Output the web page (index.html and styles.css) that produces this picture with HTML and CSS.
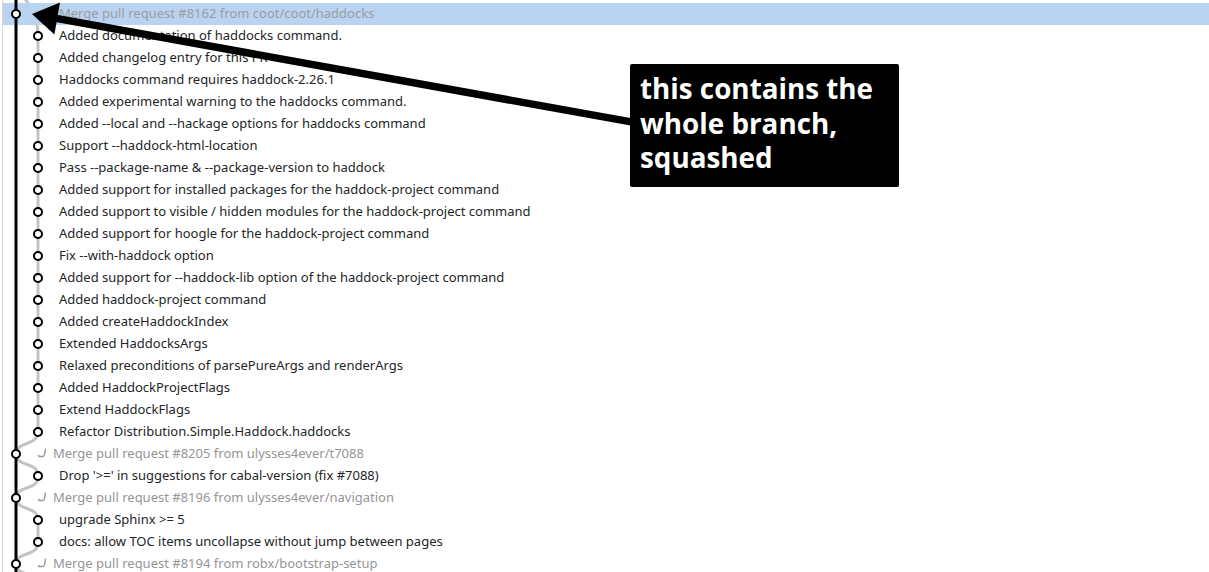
FILE: index.html
```html
<!DOCTYPE html>
<html>
<head>
<meta charset="utf-8">
<link rel="stylesheet" href="styles.css">
</head>
<body>
<div class="view">
  <div class="list">
    <div class="row merge selected"><span class="mi"><svg width="10" height="10" viewBox="0 0 10 10"><path d="M8.5 0.5 L7.6 6.5 Q7.3 8.5 5.5 8.5 L2 8.5 L1.6 6.8" fill="none" stroke="#999" stroke-width="1.4"/></svg></span>Merge pull request #8162 from coot/coot/haddocks</div>
    <div class="row">Added documentation of haddocks command.</div>
    <div class="row">Added changelog entry for this PR</div>
    <div class="row">Haddocks command requires haddock-2.26.1</div>
    <div class="row">Added experimental warning to the haddocks command.</div>
    <div class="row">Added --local and --hackage options for haddocks command</div>
    <div class="row">Support --haddock-html-location</div>
    <div class="row">Pass --package-name &amp; --package-version to haddock</div>
    <div class="row">Added support for installed packages for the haddock-project command</div>
    <div class="row">Added support to visible / hidden modules for the haddock-project command</div>
    <div class="row">Added support for hoogle for the haddock-project command</div>
    <div class="row">Fix --with-haddock option</div>
    <div class="row">Added support for --haddock-lib option of the haddock-project command</div>
    <div class="row">Added haddock-project command</div>
    <div class="row">Added createHaddockIndex</div>
    <div class="row">Extended HaddocksArgs</div>
    <div class="row">Relaxed preconditions of parsePureArgs and renderArgs</div>
    <div class="row">Added HaddockProjectFlags</div>
    <div class="row">Extend HaddockFlags</div>
    <div class="row">Refactor Distribution.Simple.Haddock.haddocks</div>
    <div class="row merge"><span class="mi"><svg width="10" height="10" viewBox="0 0 10 10"><path d="M8.5 0.5 L7.6 6.5 Q7.3 8.5 5.5 8.5 L2 8.5 L1.6 6.8" fill="none" stroke="#999" stroke-width="1.4"/></svg></span>Merge pull request #8205 from ulysses4ever/t7088</div>
    <div class="row">Drop '&gt;=' in suggestions for cabal-version (fix #7088)</div>
    <div class="row merge"><span class="mi"><svg width="10" height="10" viewBox="0 0 10 10"><path d="M8.5 0.5 L7.6 6.5 Q7.3 8.5 5.5 8.5 L2 8.5 L1.6 6.8" fill="none" stroke="#999" stroke-width="1.4"/></svg></span>Merge pull request #8196 from ulysses4ever/navigation</div>
    <div class="row">upgrade Sphinx &gt;= 5</div>
    <div class="row">docs: allow TOC items uncollapse without jump between pages</div>
    <div class="row merge"><span class="mi"><svg width="10" height="10" viewBox="0 0 10 10"><path d="M8.5 0.5 L7.6 6.5 Q7.3 8.5 5.5 8.5 L2 8.5 L1.6 6.8" fill="none" stroke="#999" stroke-width="1.4"/></svg></span>Merge pull request #8194 from robx/bootstrap-setup</div>
  </div>

  <svg class="graph" width="60" height="572" viewBox="0 0 60 572">
    <g fill="none" stroke="#c3c3c3" stroke-width="3">
      <path d="M22 -6 C30 6, 38 18, 38 35"/>
      <path d="M38 35 L38 431"/>
      <path d="M38 431 C38 447, 17 440, 16 454"/>
      <path d="M16 454 C17 468, 38 461, 38 476"/>
      <path d="M38 476 C38 492, 17 484, 16 498"/>
      <path d="M16 498 C17 512, 38 505, 38 520"/>
      <path d="M38 520 L38 542"/>
      <path d="M38 542 C38 558, 17 550, 16 564"/>
      <path d="M16 564 C18 576, 30 570, 34 582"/>
    </g>
    <rect x="3" y="3" width="54" height="22" fill="#b9d3f1"/>
    <path d="M16 0 L16 572" stroke="#000" stroke-width="3"/>
    <g fill="#fff" stroke="#000" stroke-width="2">
      <circle cx="16" cy="14" r="4"/>
      <circle cx="38" cy="36" r="4"/>
      <circle cx="38" cy="58" r="4"/>
      <circle cx="38" cy="80" r="4"/>
      <circle cx="38" cy="102" r="4"/>
      <circle cx="38" cy="124" r="4"/>
      <circle cx="38" cy="146" r="4"/>
      <circle cx="38" cy="168" r="4"/>
      <circle cx="38" cy="190" r="4"/>
      <circle cx="38" cy="212" r="4"/>
      <circle cx="38" cy="234" r="4"/>
      <circle cx="38" cy="256" r="4"/>
      <circle cx="38" cy="278" r="4"/>
      <circle cx="38" cy="300" r="4"/>
      <circle cx="38" cy="322" r="4"/>
      <circle cx="38" cy="344" r="4"/>
      <circle cx="38" cy="366" r="4"/>
      <circle cx="38" cy="388" r="4"/>
      <circle cx="38" cy="410" r="4"/>
      <circle cx="38" cy="432" r="4"/>
      <circle cx="16" cy="454" r="4"/>
      <circle cx="38" cy="476" r="4"/>
      <circle cx="16" cy="498" r="4"/>
      <circle cx="38" cy="520" r="4"/>
      <circle cx="38" cy="542" r="4"/>
      <circle cx="16" cy="564" r="4"/>
    </g>
  </svg>

  <svg class="arrow" width="1209" height="572" viewBox="0 0 1209 572">
    <path d="M52 17.6 L634 122.4" stroke="#000" stroke-width="7.5"/>
    <polygon points="32,14 60,2.6 54.4,34.4" fill="#000"/>
  </svg>

  <div class="note">this contains the whole branch, squashed</div>
</div>
</body>
</html>
```

FILE: styles.css
```css
html, body {
  margin: 0;
  padding: 0;
  background: #fff;
}

.view {
  position: relative;
  width: 1209px;
  height: 572px;
  overflow: hidden;
}

.list {
  margin-left: 2px;
  padding-top: 3px;
  border-left: 1px solid #d8d8d8;
  height: 569px;
  font-family: "Noto Sans", "Open Sans", sans-serif;
  font-size: 13px;
  color: #232627;
}

.row {
  box-sizing: border-box;
  height: 22px;
  padding-bottom: 2px;
  display: flex;
  align-items: center;
  padding-left: 56px;
  white-space: nowrap;
}

.row.merge {
  padding-left: 34px;
  color: #959595;
}

.row.selected {
  background: #b9d3f1;
  padding-left: 40px;
  color: #9a9ea3;
}

.mi {
  display: inline-flex;
  width: 16px;
  height: 10px;
}

.graph {
  position: absolute;
  left: 0;
  top: 0;
}

.arrow {
  position: absolute;
  left: 0;
  top: 0;
  pointer-events: none;
}

.note {
  position: absolute;
  left: 630px;
  top: 64px;
  width: 249px;
  height: 103px;
  padding: 7px 10px 13px 10px;
  background: #000;
  border-radius: 2px;
  color: #fff;
  font-family: "Open Sans", "Noto Sans", sans-serif;
  font-weight: 700;
  font-size: 27.8px;
  line-height: 34.5px;
}
```
